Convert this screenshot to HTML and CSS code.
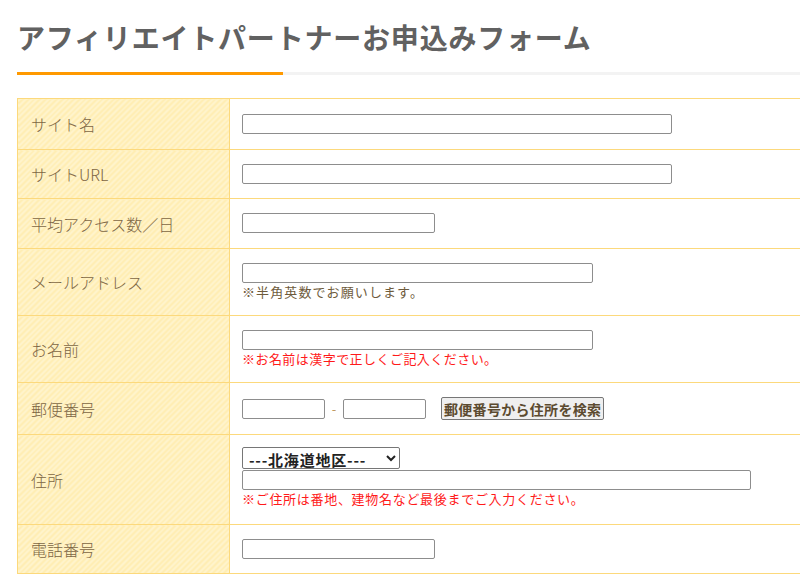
FILE: index.html
```html
<!DOCTYPE html>
<html lang="ja">
<head>
<meta charset="UTF-8">
<meta name="viewport" content="width=device-width, initial-scale=1.0">
<title>アフィリエイトパートナーお申込みフォーム</title>
<link rel="stylesheet" href="styles.css">
</head>
<body>
    <div class="page">
        <h1 class="page-title">アフィリエイトパートナーお申込みフォーム</h1>

        <form class="entry-form">
            <table class="form-table">
                <tr class="row-first">
                    <th>サイト名</th>
                    <td><input type="text" class="w-long"></td>
                </tr>
                <tr>
                    <th>サイトURL</th>
                    <td><input type="text" class="w-long"></td>
                </tr>
                <tr class="row-access">
                    <th>平均アクセス数／日</th>
                    <td><input type="text" class="w-short"></td>
                </tr>
                <tr>
                    <th>メールアドレス</th>
                    <td>
                        <input type="text" class="w-mid">
                        <p class="note">※半角英数でお願いします。</p>
                    </td>
                </tr>
                <tr>
                    <th>お名前</th>
                    <td>
                        <input type="text" class="w-mid">
                        <p class="note note-red">※お名前は漢字で正しくご記入ください。</p>
                    </td>
                </tr>
                <tr>
                    <th>郵便番号</th>
                    <td>
                        <div class="zip">
                            <input type="text" class="w-zip">
                            <span class="zip-dash">-</span>
                            <input type="text" class="w-zip">
                            <button type="button" class="zip-btn">郵便番号から住所を検索</button>
                        </div>
                    </td>
                </tr>
                <tr>
                    <th>住所</th>
                    <td class="address">
                        <select class="pref">
                            <option>---北海道地区---</option>
                        </select>
                        <input type="text" class="w-addr">
                        <p class="note note-red note-wide">※ご住所は番地、建物名など最後までご入力ください。</p>
                    </td>
                </tr>
                <tr>
                    <th>電話番号</th>
                    <td><input type="text" class="w-short"></td>
                </tr>
            </table>
        </form>
    </div>
</body>
</html>
```

FILE: styles.css
```css
html {
    overflow: hidden;
}
body {
    margin: 0;
    background: #fff;
    font-family: "Noto Sans CJK JP", "Noto Sans", sans-serif;
    color: #7d6644;
}
.page {
    width: 830px;
    padding-left: 17px;
}

/* 見出し：グレーの線の上にオレンジのアクセント */
.page-title {
    margin: 0;
    padding: 17px 0 17px;
    font-size: 28px;
    line-height: 41px;
    letter-spacing: 0.8px;
    font-weight: bold;
    color: #616161;
    background:
        linear-gradient(#ff9900, #ff9900) left bottom / 266px 3px no-repeat,
        linear-gradient(#f3f3f3, #f3f3f3) left bottom / 100% 3px no-repeat;
}

.entry-form {
    margin-top: 23px;
}
.form-table {
    width: 100%;
    border-collapse: collapse;
}
.form-table th,
.form-table td {
    border: 1px solid #fcd97c;
    vertical-align: middle;
}
.form-table th {
    width: 198px;
    padding: 0 0 0 13px;
    text-align: left;
    font-weight: 300;
    font-size: 16px;
    background: repeating-linear-gradient(135deg, #fff4cc 0 2px, #ffedb3 2px 4px);
}
.form-table td {
    padding: 14px 12px;
    background: #fff;
    font-size: 13px;
}
.row-first td {
    padding: 15px 12px;
}
.row-access td {
    padding-bottom: 15px;
}

input[type="text"] {
    display: block;
    box-sizing: border-box;
    height: 20px;
    margin: 0;
    padding: 0 4px;
    border: 1px solid #8d8d8d;
    border-radius: 2px;
    background: #fff;
}
.w-long { width: 430px; }
.w-mid { width: 351px; }
.w-short { width: 193px; }
.w-zip { width: 83px; }
.w-addr { width: 509px; }

.note {
    margin: 0;
    font-size: 13px;
    line-height: 18px;
    letter-spacing: 1.1px;
    color: #6e5b3c;
}
.note-red {
    color: #ff1a1a;
    letter-spacing: 0.45px;
}
.note-wide {
    letter-spacing: 0.7px;
}

.zip {
    display: flex;
    align-items: center;
}
.zip-dash {
    width: 18px;
    text-align: center;
    color: #c09a60;
}
.zip-btn {
    margin-left: 15px;
    height: 23px;
    padding: 0 2px;
    font-family: "Noto Sans CJK JP", sans-serif;
    font-size: 14px;
    font-weight: bold;
    letter-spacing: 0.3px;
    color: #5c4b30;
    background: #efefef;
    border: 1px solid #767676;
    border-radius: 2px;
}

.form-table .address {
    vertical-align: top;
    padding: 12px 12px 16px;
}
.pref {
    display: block;
    width: 158px;
    height: 22px;
    margin: 0 0 1px;
    padding: 0 2px;
    font-family: "Noto Sans CJK JP", sans-serif;
    font-size: 15px;
    font-weight: bold;
    letter-spacing: 0.8px;
    color: #222;
    border: 1px solid #767676;
    border-radius: 2px;
    background: #fff;
}
```
